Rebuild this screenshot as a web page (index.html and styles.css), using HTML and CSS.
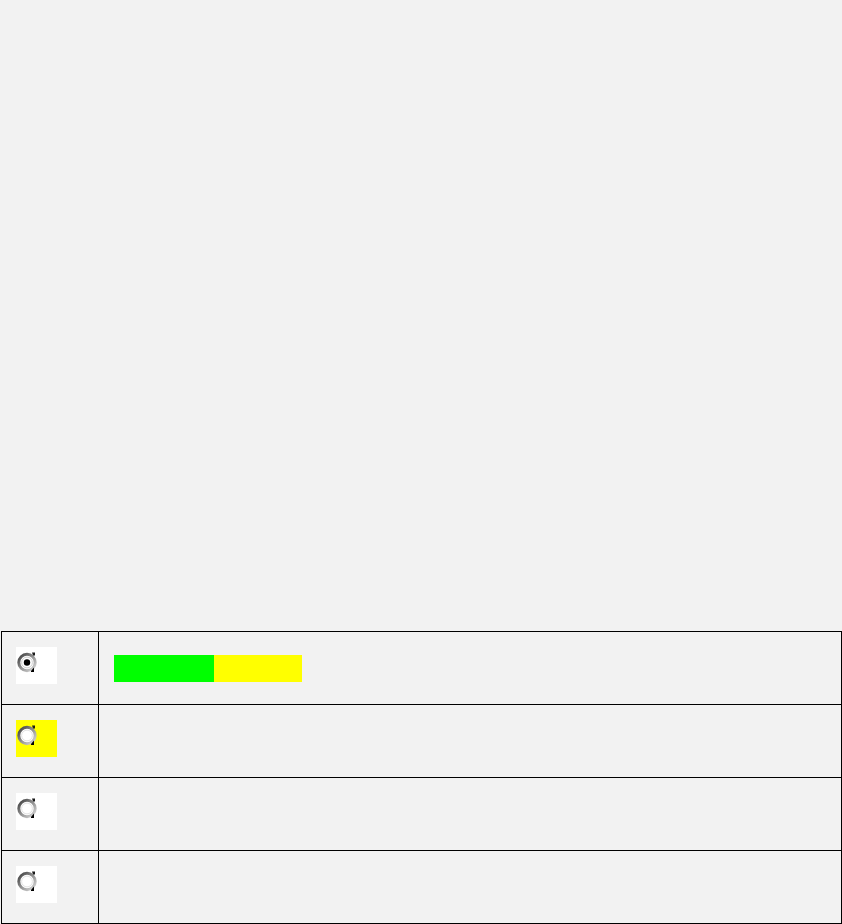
FILE: index.html
```html
<!DOCTYPE html>
<html>
<head>
<meta charset="utf-8">
<link rel="stylesheet" href="styles.css">
</head>
<body>
<div class="spacer"></div>
<div class="grid">
  <div class="cell sel">
    <div class="box">
      <svg class="radio" width="21" height="21" viewBox="0 0 21 21">
        <defs>
          <linearGradient id="rg1" x1="0" y1="0" x2="1" y2="1">
            <stop offset="0" stop-color="#3c3c3c"/>
            <stop offset="0.45" stop-color="#8a8a8a"/>
            <stop offset="1" stop-color="#dcdcdc"/>
          </linearGradient>
        </defs>
        <circle cx="10" cy="10.5" r="8.2" fill="#fff" stroke="url(#rg1)" stroke-width="3"/>
        <circle cx="10" cy="10.5" r="5.4" fill="none" stroke="#d0d0d0" stroke-width="1"/>
        <circle cx="10" cy="10.5" r="3.2" fill="#000"/>
        <path d="M15 0.5h3v3h-2z" fill="#1a1a1a"/>
        <path d="M14 19l3-3.5v4.5h-3z" fill="#000"/>
      </svg>
    </div>
  </div>
  <div class="cell">
    <div class="bar"><span class="seg green"></span><span class="seg yellow"></span></div>
  </div>

  <div class="cell sel">
    <div class="box hl">
      <svg class="radio" width="21" height="21" viewBox="0 0 21 21">
        <defs>
          <linearGradient id="rg2" x1="0" y1="0" x2="1" y2="1">
            <stop offset="0" stop-color="#3c3c3c"/>
            <stop offset="0.45" stop-color="#8a8a8a"/>
            <stop offset="1" stop-color="#dcdcdc"/>
          </linearGradient>
        </defs>
        <circle cx="10" cy="10.5" r="8.2" fill="#fff" stroke="url(#rg2)" stroke-width="3"/>
        <circle cx="10" cy="10.5" r="5.4" fill="none" stroke="#e2e2e2" stroke-width="1"/>
        <path d="M15 0.5h3v3h-2z" fill="#1a1a1a"/>
        <path d="M14 19l3-3.5v4.5h-3z" fill="#000"/>
      </svg>
    </div>
  </div>
  <div class="cell"></div>

  <div class="cell sel">
    <div class="box">
      <svg class="radio" width="21" height="21" viewBox="0 0 21 21">
        <defs>
          <linearGradient id="rg3" x1="0" y1="0" x2="1" y2="1">
            <stop offset="0" stop-color="#3c3c3c"/>
            <stop offset="0.45" stop-color="#8a8a8a"/>
            <stop offset="1" stop-color="#dcdcdc"/>
          </linearGradient>
        </defs>
        <circle cx="10" cy="10.5" r="8.2" fill="#fff" stroke="url(#rg3)" stroke-width="3"/>
        <circle cx="10" cy="10.5" r="5.4" fill="none" stroke="#e2e2e2" stroke-width="1"/>
        <path d="M15 0.5h3v3h-2z" fill="#1a1a1a"/>
        <path d="M14 19l3-3.5v4.5h-3z" fill="#000"/>
      </svg>
    </div>
  </div>
  <div class="cell"></div>

  <div class="cell sel">
    <div class="box">
      <svg class="radio" width="21" height="21" viewBox="0 0 21 21">
        <defs>
          <linearGradient id="rg4" x1="0" y1="0" x2="1" y2="1">
            <stop offset="0" stop-color="#3c3c3c"/>
            <stop offset="0.45" stop-color="#8a8a8a"/>
            <stop offset="1" stop-color="#dcdcdc"/>
          </linearGradient>
        </defs>
        <circle cx="10" cy="10.5" r="8.2" fill="#fff" stroke="url(#rg4)" stroke-width="3"/>
        <circle cx="10" cy="10.5" r="5.4" fill="none" stroke="#e2e2e2" stroke-width="1"/>
        <path d="M15 0.5h3v3h-2z" fill="#1a1a1a"/>
        <path d="M14 19l3-3.5v4.5h-3z" fill="#000"/>
      </svg>
    </div>
  </div>
  <div class="cell"></div>
</div>
</body>
</html>
```

FILE: styles.css
```css
html, body {
  margin: 0;
  padding: 0;
  background: #f2f2f2;
  font-family: "Liberation Sans", Arial, sans-serif;
}

.spacer {
  height: 631px;
}

.grid {
  margin-left: 1px;
  width: 840px;
  display: grid;
  grid-template-columns: 97px 743px;
  grid-auto-rows: 73px;
  border-top: 1px solid #000;
  border-left: 1px solid #000;
}

.cell {
  border-right: 1px solid #000;
  border-bottom: 1px solid #000;
  display: flex;
  align-items: center;
  padding-left: 15px;
}

.cell.sel {
  align-items: flex-start;
  padding-left: 14px;
  padding-top: 15px;
}

.box {
  width: 41px;
  height: 37px;
  background: #fff;
  padding: 5px 0 0 1px;
  box-sizing: border-box;
}

.box.hl {
  background: #ffff00;
}

.radio {
  display: block;
}

.bar {
  display: flex;
  height: 27px;
}

.seg {
  display: block;
  height: 27px;
}

.green {
  width: 100px;
  background: #00ff00;
}

.yellow {
  width: 88px;
  background: #ffff00;
}
```
